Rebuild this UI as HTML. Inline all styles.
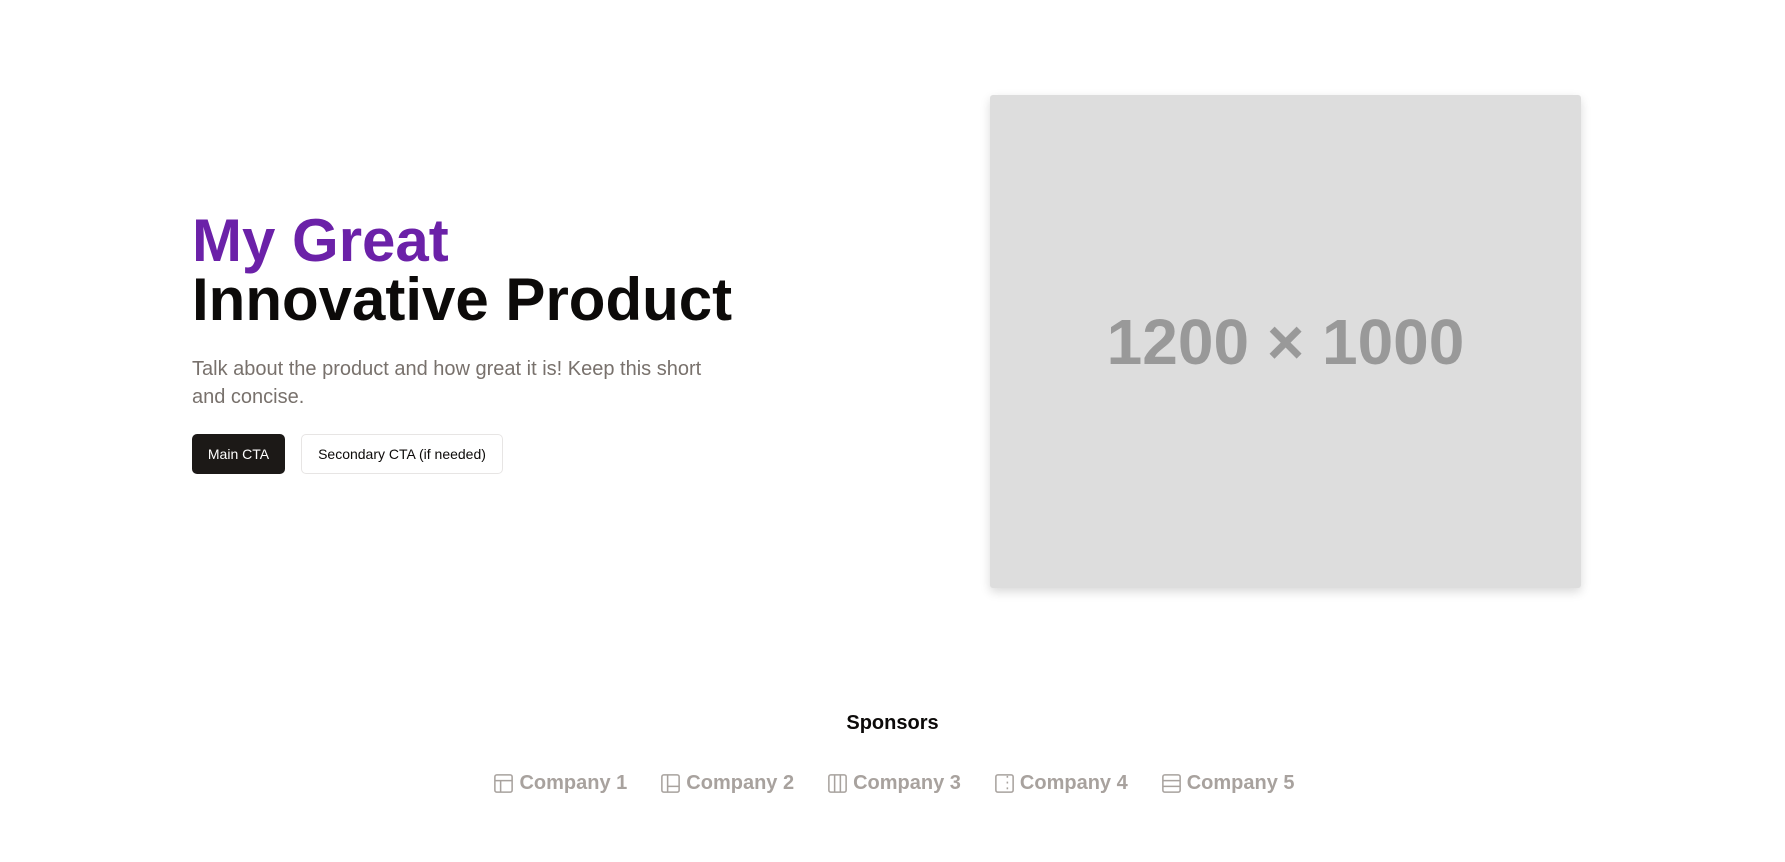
<!DOCTYPE html>
<html><head><meta charset="utf-8"><style>
*{margin:0;padding:0;box-sizing:border-box}
body{width:1785px;height:862px;background:#fff;font-family:"Liberation Sans",Arial,sans-serif;position:relative;overflow:hidden}
h1{position:absolute;left:192px;top:211px;font-size:60px;line-height:59px;font-weight:700;color:#0c0a09;letter-spacing:0}
h1 span{color:#6b21a8}
p.lead{position:absolute;left:192px;top:355px;width:540px;font-size:20px;line-height:28px;color:#78716c}
.btn{position:absolute;top:434px;height:40px;font-size:14px;line-height:40px;text-align:center;border-radius:5px}
.b1{left:192px;width:93px;background:#1c1917;color:#fff}
.b2{left:301px;width:202px;border:1px solid #e7e5e4;color:#0c0a09;line-height:38px}
.img{position:absolute;left:990px;top:95px;width:591px;height:493px;background:#dddddd;border-radius:3px;box-shadow:0 4px 10px rgba(0,0,0,.15);display:flex;align-items:center;justify-content:center;font-size:64px;font-weight:700;color:#999}
.sp{position:absolute;left:0;width:1785px;top:712px;text-align:center;font-size:20px;font-weight:700;color:#0c0a09}
.cos{position:absolute;left:1px;width:1785px;top:770px;display:flex;justify-content:center;gap:32px}
.co{display:flex;align-items:center;gap:4px;font-size:20px;font-weight:700;color:#a8a29e;line-height:26px}
.co svg{width:23px;height:23px}
</style></head><body>
<h1><span>My Great</span><br>Innovative Product</h1>
<p class="lead">Talk about the product and how great it is! Keep this short and concise.</p>
<div class="btn b1">Main CTA</div>
<div class="btn b2">Secondary CTA (if needed)</div>
<div class="img">1200 × 1000</div>
<div class="sp">Sponsors</div>
<div class="cos">
<div class="co"><svg viewBox="0 0 24 24" fill="none" stroke="#a8a29e" stroke-width="1.6"><rect x="3" y="3" width="18" height="18" rx="2"/><path d="M3 9h18M9 9v12"/></svg>Company 1</div>
<div class="co"><svg viewBox="0 0 24 24" fill="none" stroke="#a8a29e" stroke-width="1.6"><rect x="3" y="3" width="18" height="18" rx="2"/><path d="M9 3v18M9 15h12"/></svg>Company 2</div>
<div class="co"><svg viewBox="0 0 24 24" fill="none" stroke="#a8a29e" stroke-width="1.6"><rect x="3" y="3" width="18" height="18" rx="2"/><path d="M9 3v18M15 3v18"/></svg>Company 3</div>
<div class="co"><svg viewBox="0 0 24 24" fill="none" stroke="#a8a29e" stroke-width="1.6"><rect x="3" y="3" width="18" height="18" rx="2"/><path d="M15 4v2M15 10v2M15 16v2"/></svg>Company 4</div>
<div class="co"><svg viewBox="0 0 24 24" fill="none" stroke="#a8a29e" stroke-width="1.6"><rect x="3" y="3" width="18" height="18" rx="2"/><path d="M3 9h18M3 15h18"/></svg>Company 5</div>
</div>
</body></html>
